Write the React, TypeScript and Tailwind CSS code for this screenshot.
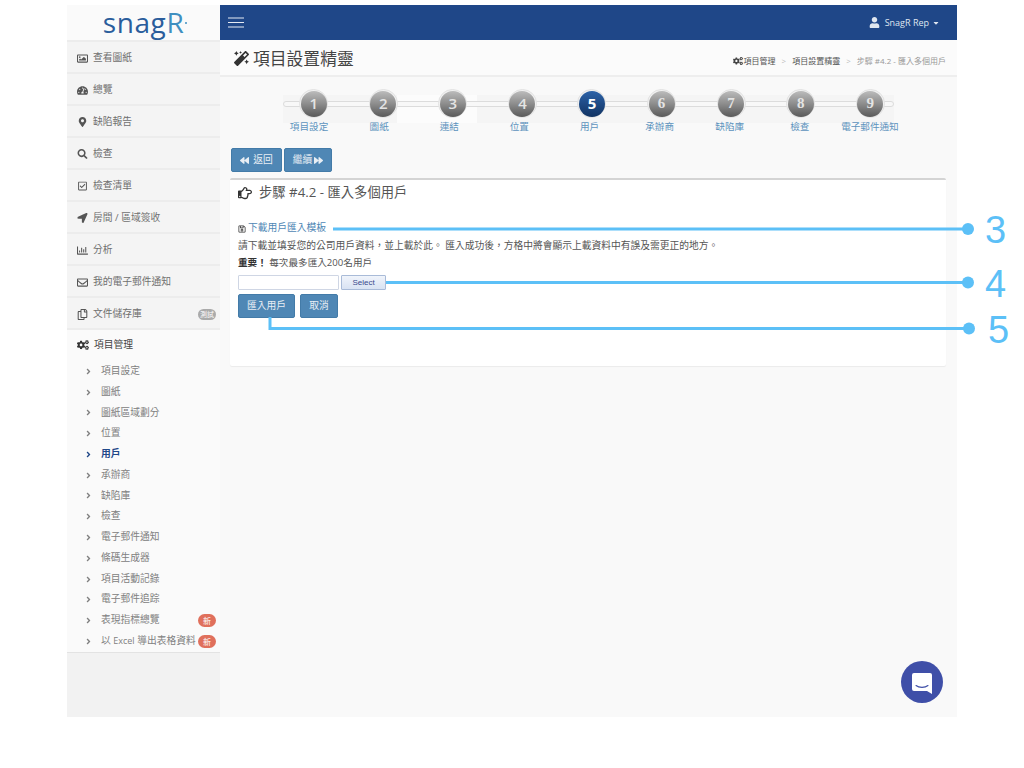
import React from "react";
import {
  FaRegImage, FaTachometerAlt, FaMapMarkerAlt, FaSearch, FaRegCheckSquare, FaLocationArrow,
  FaRegChartBar, FaRegEnvelope, FaRegCopy, FaCogs, FaAngleRight, FaMagic, FaBackward, FaForward,
  FaRegHandPointRight, FaRegSave, FaUser, FaCaretDown,
} from "react-icons/fa";

const FONT = "[font-family:'Open_Sans','Noto_Sans_CJK_TC',sans-serif]";

const mainItems: [React.ComponentType<{ className?: string }>, string, string, string?][] = [
  [FaRegImage, "查看圖紙", "w-[11px] h-[11px]"],
  [FaTachometerAlt, "總覽", "w-[11px] h-[11px]"],
  [FaMapMarkerAlt, "缺陷報告", "w-[11px] h-[10px]"],
  [FaSearch, "檢查", "w-[11px] h-[10px]"],
  [FaRegCheckSquare, "檢查清單", "w-[11px] h-[10px]"],
  [FaLocationArrow, "房間 / 區域簽收", "w-[11px] h-[10px]"],
  [FaRegChartBar, "分析", "w-[11px] h-[11px]"],
  [FaRegEnvelope, "我的電子郵件通知", "w-[11px] h-[11px]"],
  [FaRegCopy, "文件儲存庫", "w-[11px] h-[11px]", "測試"],
];

const subItems: [React.ReactNode, string, boolean?, boolean?][] = [
  ["項目設定", "a"], ["圖紙", "b"], ["圖紙區域劃分", "c"], ["位置", "d"], ["用戶", "e", true], ["承辦商", "f"], ["缺陷庫", "g"], ["檢查", "h"],
  ["電子郵件通知", "i"], ["條碼生成器", "j"], ["項目活動記錄", "k"], ["電子郵件追踪", "l"], ["表現指標總覽", "m", false, true],
  [<>以 <span className="text-[9px]">Excel</span> 導出表格資料</>, "n", false, true],
];

const steps = ["項目設定", "圖紙", "連結", "位置", "用戶", "承辦商", "缺陷庫", "檢查", "電子郵件通知"];

function Sidebar() {
  return (
    <aside className="w-[153px] shrink-0 bg-[#f2f2f2] flex flex-col">
      <div className="h-[35px] bg-[#fafafa] flex items-center justify-center">
        <span className="relative -top-[1px] text-[28px] leading-none tracking-[0.6px] font-medium text-[#2a5d9c]">
          snag<span className="text-[#3f8fc0]">R</span>
          <span className="absolute right-[-3px] top-[14px] w-[2px] h-[2px] rounded-full bg-[#3f8fc0]" />
        </span>
      </div>
      <nav>
        {mainItems.map(([Icon, label, size, badge]) => (
          <div key={label} className="h-[32px] flex items-center pt-[2px] pl-[10px] pr-[4px] bg-[#f4f4f4] border-t-2 border-[#ececec] text-[9.75px] text-[#707070]">
            <Icon className={`${size} text-[#555] shrink-0`} />
            <span className="ml-[5px] flex-1 whitespace-nowrap">{label}</span>
            {badge && <span className="w-[18px] text-center rounded-full bg-[#aaa] text-white text-[7px] leading-[11px]">{badge}</span>}
          </div>
        ))}
        <div className="bg-[#fafafa] border-t-2 border-[#ececec] border-b border-b-[#e3e3e3]">
          <div className="h-[30px] flex items-center pl-[10px] text-[9.75px] text-[#444]">
            <FaCogs className="w-[12px] h-[12px] text-[#333]" />
            <span className="ml-[5px]">項目管理</span>
          </div>
          <ul className="pt-[1px]">
            {subItems.map(([label, key, active, isNew]) => (
              <li key={key} className={`h-[20.77px] flex items-center pl-[17px] pr-[4px] text-[9.75px] whitespace-nowrap ${active ? "text-[#1f4788] font-semibold" : "text-[#808080]"}`}>
                <FaAngleRight className={`w-[9px] h-[9px] shrink-0 ${active ? "text-[#1f4788]" : "text-[#808080]"}`} />
                <span className="ml-[8px] flex-1">{label}</span>
                {isNew && <span className="w-[18px] text-center rounded-full bg-[#e0705c] text-white text-[8px] leading-[13px]">新</span>}
              </li>
            ))}
          </ul>
        </div>
      </nav>
    </aside>
  );
}

function Stepper() {
  return (
    <div className="relative ml-[54px] mt-[12px] w-[640px] h-[45px]">
      <div className="absolute left-[9px] top-[6px] w-[611px] h-[28px] bg-[#f5f5f5]" />
      <div className="absolute left-[123px] top-[6px] w-[80px] h-[28px] bg-[#fcfcfc]" />
      <div className="absolute left-[9px] top-[12px] w-[611px] h-[6px] rounded-full border border-[#dcdcdc] bg-[#f8f8f8]" />
      <div className="relative ml-[5px] w-[626px] grid grid-cols-9">
        {steps.map((s, i) => (
          <div key={s} className="flex justify-center">
            <div className="w-[29px] h-[29px] rounded-full bg-[#f1f1f1] border border-[#e2e2e2] flex items-center justify-center">
              <div className={`w-[26px] h-[26px] rounded-full flex items-center justify-center text-[15px] ${i === 4 ? "bg-gradient-to-b from-[#2c62a8] to-[#123463] text-white font-bold" : i > 4 ? "bg-gradient-to-b from-[#bcbcbc] via-[#8c8c8c] to-[#5a5a5a] text-[#e4e4e4] font-bold [font-family:'Liberation_Serif',serif]" : "bg-gradient-to-b from-[#bcbcbc] via-[#8c8c8c] to-[#5a5a5a] text-[#e4e4e4] font-semibold"}`}>
                {i + 1}
              </div>
            </div>
          </div>
        ))}
      </div>
      <div className="relative w-[631px] mt-[2px] grid grid-cols-9">
        {steps.map((s) => (
          <div key={s} className="flex justify-center text-[9.6px] leading-[14px] text-[#5d93bd] whitespace-nowrap">{s}</div>
        ))}
      </div>
    </div>
  );
}

function Btn({ children, className = "" }: { children: React.ReactNode; className?: string }) {
  return (
    <button className={`bg-[#4f87b5] border border-[#437ba8] rounded-[2px] text-[#e8eef4] text-[9.75px] flex items-center justify-center ${className}`}>
      {children}
    </button>
  );
}

function Annotations() {
  const c = "#5cc0f7";
  return (
    <>
      <svg className="absolute left-0 top-0 pointer-events-none" width="1024" height="768">
        <g stroke={c} strokeWidth="3" fill="none">
          <path d="M333 229H968" />
          <path d="M386 282.5H968" />
          <path d="M270 317V328.5H968" />
        </g>
        <g fill={c}>
          <circle cx="968" cy="229" r="6" />
          <circle cx="968" cy="282.5" r="6" />
          <circle cx="969" cy="328.5" r="6" />
        </g>
      </svg>
      <div className="absolute left-[985px] top-[207px] text-[38px] leading-[46px] text-[#5cc0f7] [font-family:'Liberation_Sans',sans-serif]">3</div>
      <div className="absolute left-[985px] top-[261px] text-[38px] leading-[46px] text-[#5cc0f7] [font-family:'Liberation_Sans',sans-serif]">4</div>
      <div className="absolute left-[988px] top-[307px] text-[38px] leading-[46px] text-[#5cc0f7] [font-family:'Liberation_Sans',sans-serif]">5</div>
    </>
  );
}

export default function App() {
  return (
    <div lang="zh-TW" className={`relative w-[1024px] h-[768px] bg-white overflow-hidden pt-[5px] pl-[67px] ${FONT}`}>
      <div className="flex w-[890px] h-[712px]">
        <Sidebar />
        <main className="relative flex-1 bg-[#f9f9f9] flex flex-col">
          <header className="h-[35px] bg-[#1f4788] flex items-center justify-between pl-[8px] pr-[18px] text-[#dfe6f0]">
            <svg width="16" height="11" viewBox="0 0 16 11" className="text-[#e6ebf3]">
              <path d="M0 1H16M0 5.5H16M0 10H16" stroke="currentColor" strokeWidth="1.2" />
            </svg>
            <div className="flex items-center text-[9px]">
              <FaUser className="w-[11px] h-[11px] mr-[5px]" />
              <span>SnagR Rep</span>
              <FaCaretDown className="w-[6px] h-[8px] ml-[4px]" />
            </div>
          </header>
          <div className="h-[37px] bg-[#fbfbfb] border-b-2 border-[#eeeeee] flex items-center justify-between pl-[14px] pr-[11px]">
            <div className="flex items-center mt-[2px] text-[16.8px] text-[#444]">
              <FaMagic className="w-[15px] h-[15px] mr-[4px] text-[#333]" />
              <span>項目設置精靈</span>
            </div>
            <div className="flex items-center mt-[6px] text-[8px] text-[#555] whitespace-nowrap">
              <FaCogs className="w-[10px] h-[10px] mr-[1px] text-[#444]" />
              <span>項目管理</span>
              <span className="mx-[6px] text-[#bbb]">&gt;</span>
              <span>項目設置精靈</span>
              <span className="mx-[6px] text-[#bbb]">&gt;</span>
              <span className="text-[#999]">步驟 #4.2 - 匯入多個用戶</span>
            </div>
          </div>
          <Stepper />
          <div className="flex gap-[2px] ml-[11px] mt-[14px]">
            <Btn className="w-[51px] h-[24px] gap-[4px]"><FaBackward className="w-[9px] h-[9px]" />返回</Btn>
            <Btn className="w-[48px] h-[24px] gap-[2px]">繼續<FaForward className="w-[9px] h-[9px]" /></Btn>
          </div>
          <section className="ml-[10px] mt-[6px] w-[716px] h-[188px] bg-white border-t-2 border-[#d4d4d4] rounded-[2px] shadow-[0_1px_1px_rgba(0,0,0,0.06)] pl-[8px] pt-[2px]">
            <div className="flex items-center h-[22px] text-[13.3px] text-[#555]">
              <FaRegHandPointRight className="w-[14px] h-[14px] text-[#333] mr-[7px]" />
              <span>步驟 #4.2 - 匯入多個用戶</span>
            </div>
            <div className="mt-[16px] h-[17px] flex items-center text-[9.75px] text-[#4f87b5]">
              <FaRegSave className="w-[8px] h-[8px] text-[#333] mr-[2px]" />
              <span>下載用戶匯入模板</span>
            </div>
            <p className="h-[17px] leading-[17px] text-[9.75px] text-[#555] whitespace-nowrap">請下載並填妥您的公司用戶資料，並上載於此。 匯入成功後，方格中將會顯示上載資料中有誤及需更正的地方。</p>
            <p className="h-[17px] leading-[17px] text-[9.6px] text-[#555] whitespace-nowrap"><strong className="font-bold text-[#333]">重要！</strong> 每次最多匯入200名用戶</p>
            <div className="flex items-center gap-[2px] mt-[4px]">
              <div className="w-[101px] h-[15px] bg-white border border-[#cfd6e4] rounded-[1px]" />
              <div className="w-[45px] h-[15px] bg-gradient-to-b from-[#f0f4fb] to-[#d9e3f3] border border-[#a9bbd8] rounded-[1px] flex items-center justify-center text-[8px] text-[#3a4a8c] [font-family:'Liberation_Sans',sans-serif]">Select</div>
            </div>
            <div className="flex gap-[5px] mt-[4px]">
              <Btn className="w-[57px] h-[24px]">匯入用戶</Btn>
              <Btn className="w-[38px] h-[24px]">取消</Btn>
            </div>
          </section>
          <div className="absolute left-[681px] top-[656px] w-[42px] h-[42px] rounded-full bg-[#3f4fa8] flex items-center justify-center">
            <svg width="20" height="21" viewBox="0 0 20 21" className="relative top-[1px]">
              <path d="M2 0H18a2 2 0 0 1 2 2V21L15 18H2a2 2 0 0 1-2-2V2a2 2 0 0 1 2-2Z" fill="#fff" />
              <path d="M4 12.5C7 15 13 15 16 12.5" stroke="#3f4fa8" strokeWidth="1.1" fill="none" strokeLinecap="round" />
            </svg>
          </div>
        </main>
      </div>
      <Annotations />
    </div>
  );
}
